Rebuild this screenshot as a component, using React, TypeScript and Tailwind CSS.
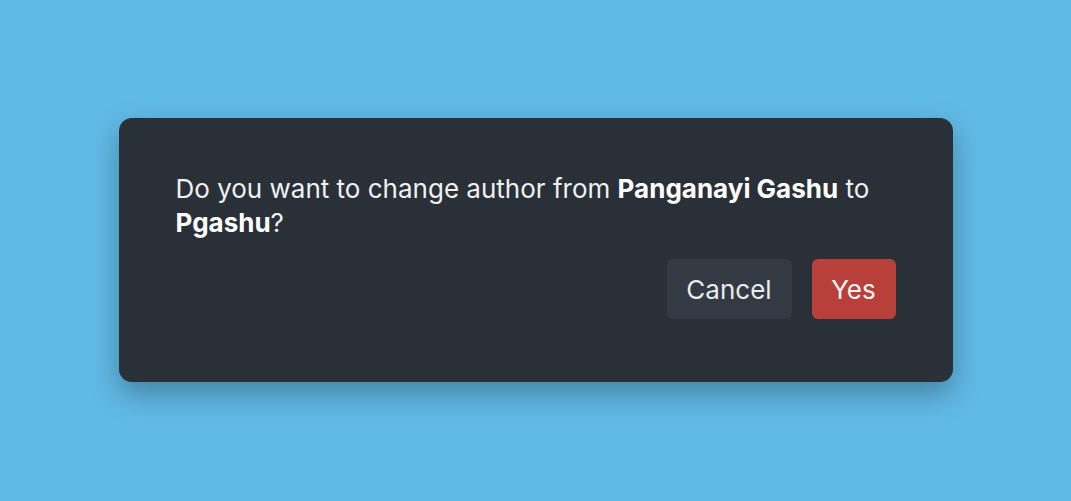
export default function App() {
  return (
    <div
      className="w-[1071px] h-[501px] bg-[#61bae6] flex items-start justify-center pt-[118px]"
      style={{ fontFamily: 'Inter, "Noto Sans", sans-serif' }}
    >
      <div className="w-[834px] h-[264px] bg-[#2a3038] rounded-[13px] shadow-[0_12px_30px_rgba(0,0,0,0.3)] px-[57px] pt-[54px]">
        <p className="text-[26px] leading-[34px] text-[#eef0f2]">
          Do you want to change author from <span className="font-bold text-white">Panganayi Gashu</span> to{' '}
          <span className="font-bold text-white">Pgashu</span>?
        </p>
        <div className="flex justify-end gap-[20px] mt-[19px]">
          <button className="h-[60px] w-[125px] rounded-[6px] bg-[#343a43] text-[26px] text-[#e8eaec]">
            Cancel
          </button>
          <button className="h-[60px] w-[84px] rounded-[6px] bg-[#b9403a] text-[26px] text-[#f4f4f4]">
            Yes
          </button>
        </div>
      </div>
    </div>
  );
}
